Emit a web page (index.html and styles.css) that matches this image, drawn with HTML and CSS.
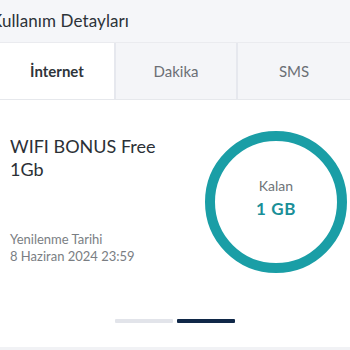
FILE: index.html
```html
<!DOCTYPE html>
<html lang="tr">
<head>
<meta charset="utf-8">
<link rel="stylesheet" href="styles.css">
</head>
<body>
<div class="page">
  <header class="header"><h1 class="title">Kullanım Detayları</h1></header>
  <nav class="tabs">
    <div class="tab active">İnternet</div>
    <div class="tab">Dakika</div>
    <div class="tab">SMS</div>
  </nav>
  <section class="card">
    <div class="row">
      <div class="info">
        <div class="name">WIFI BONUS Free<br>1Gb</div>
        <div class="renew">
          <div>Yenilenme Tarihi</div>
          <div>8 Haziran 2024 23:59</div>
        </div>
      </div>
      <div class="gauge">
        <svg class="ring" width="142" height="144" viewBox="0 0 142 144">
          <circle cx="71" cy="72" r="66" fill="none" stroke="#1a9ea6" stroke-width="10"/>
        </svg>
        <div class="gauge-text">
          <div class="gauge-label">Kalan</div>
          <div class="gauge-value">1 GB</div>
        </div>
      </div>
    </div>
    <div class="pager">
      <span class="dot"></span>
      <span class="dot on"></span>
    </div>
  </section>
  <div class="footer"></div>
</div>
</body>
</html>
```
FILE: styles.css
```css
html, body {
  margin: 0;
  padding: 0;
  background: #ffffff;
}
body {
  font-family: "Lato", "Noto Sans", sans-serif;
  width: 350px;
  height: 350px;
  overflow: hidden;
}
.page {
  display: flex;
  flex-direction: column;
  height: 350px;
}
.header {
  background: #f5f6f9;
  height: 42px;
  display: flex;
  align-items: center;
}
.title {
  margin: 0 0 2px -9px;
  font-size: 17px;
  font-weight: 400;
  color: #2c3238;
  letter-spacing: 0.1px;
}
.tabs {
  display: grid;
  grid-template-columns: 116px 122px 1fr;
  height: 56px;
  border-top: 1px solid #eaebef;
  border-bottom: 1px solid #e6e8ec;
  background: #f4f5f8;
}
.tab {
  display: flex;
  align-items: center;
  justify-content: center;
  font-size: 15px;
  color: #6b6f75;
  border-right: 2px solid #e6e8ee;
}
.tab:last-child {
  border-right: none;
}
.tab.active {
  background: #ffffff;
  color: #2f353b;
  font-weight: 700;
}
.card {
  flex: 1;
  display: flex;
  flex-direction: column;
  background: #fff;
}
.row {
  display: flex;
  justify-content: space-between;
}
.info {
  padding: 35px 0 0 10px;
  display: flex;
  flex-direction: column;
}
.name {
  font-size: 18px;
  line-height: 23px;
  color: #2b3036;
}
.renew {
  margin-top: 50px;
  font-size: 13px;
  line-height: 17px;
  color: #7a7e83;
}
.gauge {
  position: relative;
  margin: 30px 3px 0 0;
  width: 142px;
  height: 144px;
}
.ring {
  display: block;
}
.gauge-text {
  position: absolute;
  inset: 0;
  display: flex;
  flex-direction: column;
  align-items: center;
  justify-content: center;
  padding-bottom: 8px;
}
.gauge-label {
  font-size: 14px;
  color: #6e7378;
}
.gauge-value {
  margin-top: 4px;
  font-size: 17px;
  font-weight: 700;
  color: #1a8f98;
  letter-spacing: 0.6px;
}
.pager {
  display: flex;
  justify-content: center;
  gap: 4px;
  margin-top: 45px;
}
.dot {
  width: 58px;
  height: 4px;
  border-radius: 1px;
  background: #e2e4ea;
}
.dot.on {
  background: #102848;
}
.footer {
  height: 3px;
  background: #f1f2f5;
}
```
